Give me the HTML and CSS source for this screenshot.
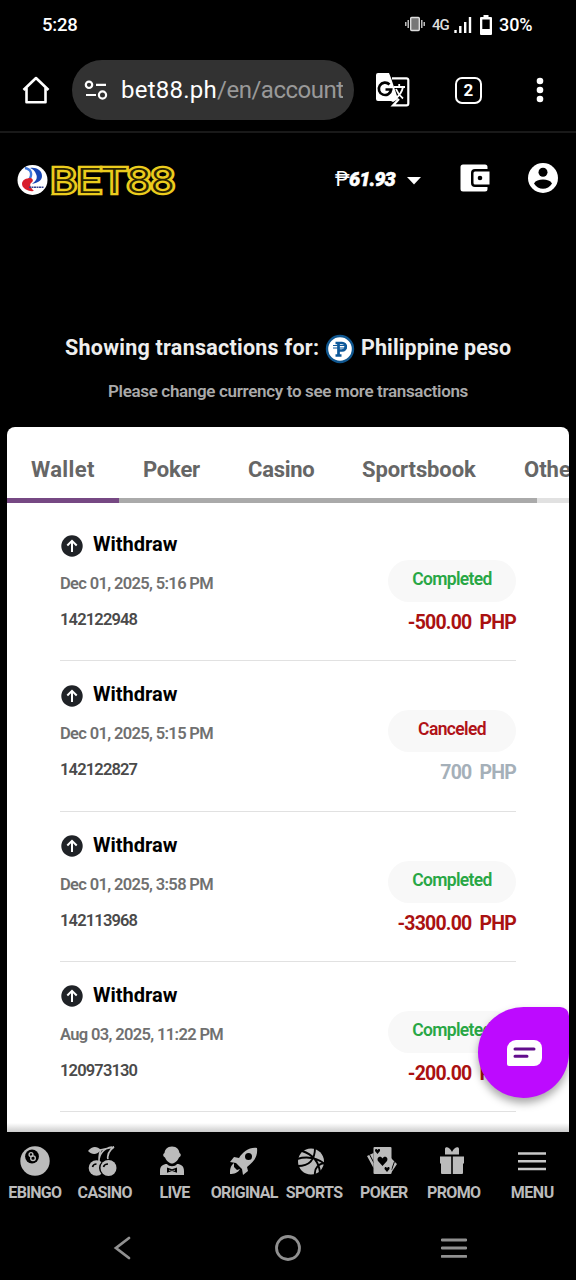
FILE: index.html
```html
<!DOCTYPE html>
<html lang="en">
<head>
<meta charset="utf-8">
<title>BET88</title>
<link rel="stylesheet" href="styles.css">
</head>
<body>
<div class="screen">
  <div class="status">
    <span class="clock">5:28</span>
    <div class="status-icons">
      <svg width="20" height="16" viewBox="0 0 20 16"><rect x="5.700" y="1.500" width="8.600" height="13" rx="1" fill="#777" stroke="#ddd" stroke-width="1.400"/><path d="M3.200 4v8M.8 6v4M16.800 4v8M19.200 6v4" stroke="#ddd" stroke-width="1.300"/></svg>
      <span class="net">4G</span>
      <svg class="signal" width="18" height="16" viewBox="0 0 18 16"><path d="M1.500 13v3M6.300 9v7M11.200 5v11M16 0v16" stroke="#fff" stroke-width="2.400"/></svg>
      <svg class="battery" width="12" height="20" viewBox="0 0 12 20"><path d="M3.500 0h5v2H11a1 1 0 0 1 1 1v16a1 1 0 0 1-1 1H1a1 1 0 0 1-1-1V3a1 1 0 0 1 1-1h2.500zM2.300 4.500V14h7.400V4.500z" fill="#fff" fill-rule="evenodd"/></svg>
      <span class="percent">30%</span>
    </div>
  </div>

  <div class="browser">
    <svg class="home" width="28" height="28" viewBox="0 0 28 28" fill="none" stroke="#fff" stroke-width="2.600" stroke-linejoin="round"><path d="M1.500 14L14 2l12.500 12M4.500 12v14.200h19V12"/></svg>
    <div class="url">
      <svg width="24" height="20" viewBox="0 0 24 20" fill="none" stroke="#fff" stroke-width="2.200"><circle cx="5" cy="4.800" r="3.200"/><path d="M12 4.800h10M2 15h10"/><circle cx="18.500" cy="15" r="3.600"/></svg>
      <div class="url-text"><span class="host">bet88.ph</span><span class="path">/en/account</span></div>
    </div>
    <svg class="translate" width="34" height="34" viewBox="0 0 34 34"><path d="M2 0h11l2 5 7 21 -5 3-2-1H2a2 2 0 0 1-2-2V2a2 2 0 0 1 2-2z" fill="#fff"/><path d="M16 5.300h14.500a1.800 1.800 0 0 1 1.800 1.800v23.500a1.800 1.800 0 0 1-1.800 1.800H17L23 26" fill="none" stroke="#fff" stroke-width="2.200"/><path d="M13.500 11.500a6.200 6.200 0 1 0 1.700 5H9.500" fill="none" stroke="#000" stroke-width="2.600"/><path d="M18 14h11M23.200 11v3M27 14c-1 5-4 9-8 12M20 16c1.500 4 4 7 7 9.500" fill="none" stroke="#fff" stroke-width="1.800"/></svg>
    <div class="count">2</div>
    <svg class="dots" width="8" height="26" viewBox="0 0 8 26" fill="#fff"><circle cx="4" cy="4" r="3.300"/><circle cx="4" cy="13" r="3.300"/><circle cx="4" cy="22" r="3.300"/></svg>
  </div>

  <header class="site">
    <svg class="logo" width="160" height="36" viewBox="0 0 160 36">
      <circle cx="15.500" cy="19" r="15" fill="#fff"/>
      <path d="M13 7c6-1 12 2 12 8 0 5-5 7-10 8 4-3 6-6 4-10-1-3-3-5-6-6z" fill="#1746b5"/>
      <path d="M8 7c6 1 8 6 4 12" fill="none" stroke="#3f78dc" stroke-width="2.400"/>
      <path d="M14 17c2 1 3 3 0 5-2 2 0 5 3 8-6 1-12-3-12-7 0-4 4-6 9-6z" fill="#d81e2c"/>
      <path d="M12 26.200h15" stroke="#33438f" stroke-width="1.600" stroke-dasharray="2 .5"/>
      <text class="logo-text logo-edge" x="33.500" y="31.600" textLength="124" lengthAdjust="spacingAndGlyphs">BET88</text>
      <text class="logo-text logo-core" x="33.500" y="31.600" textLength="124" lengthAdjust="spacingAndGlyphs">BET88</text>
    </svg>
    <div class="balance"><span class="sign">₱</span><span class="sum">61.93</span></div>
    <svg class="caret" width="14" height="8" viewBox="0 0 14 8"><path d="M0 0h14L7 7.500z" fill="#fff"/></svg>
    <svg class="purse" width="30" height="28" viewBox="0 0 30 28"><path d="M3 .5h22a2.500 2.500 0 0 1 2.500 2.500v2H15a4 4 0 0 0-4 4v10a4 4 0 0 0 4 4h12.500v2a2.500 2.500 0 0 1-2.500 2.500H3A2.500 2.500 0 0 1 .5 25V3A2.500 2.500 0 0 1 3 .5z" fill="#fff"/><path d="M15 7.500h14.500v13H15a1.500 1.500 0 0 1-1.500-1.500V9A1.500 1.500 0 0 1 15 7.500z" fill="#fff"/><circle cx="20" cy="14" r="2.300" fill="#000"/></svg>
    <svg class="user" width="30" height="30" viewBox="0 0 30 30"><circle cx="15" cy="15" r="15" fill="#fff"/><circle cx="15" cy="9.300" r="4.500" fill="#000"/><path d="M6 20.500c1.500-3 5-4 9-4s7.500 1 9 4c-2 3.500-5.500 5.300-9 5.300s-7-1.800-9-5.300z" fill="#000"/></svg>
  </header>

  <section class="heading">
    <div class="showing">
      <span>Showing transactions for:</span>
      <svg width="30" height="30" viewBox="0 0 30 30"><circle cx="15" cy="15" r="13" fill="#fff" stroke="#0f568f" stroke-width="2.400"/><path d="M10.500 9H17c5 0 5 7.500 0 7.500h-3.500M13.500 9v12M10.500 21.500h6" fill="none" stroke="#0c589a" stroke-width="2.700"/><path d="M8 11.500h14M8 14h14" stroke="#0c589a" stroke-width="1.200"/></svg>
      <span class="peso">Philippine peso</span>
    </div>
    <p class="hint">Please change currency to see more transactions</p>
  </section>

  <main class="card">
    <nav class="tabs">
      <span class="tab t-wallet">Wallet</span><span class="tab t-poker">Poker</span><span class="tab t-casino">Casino</span><span class="tab t-sports">Sportsbook</span><span class="tab">Others</span>
    </nav>
    <div class="track"><div class="active"></div><div class="rest"></div></div>
    <div class="list">
      <article class="row">
        <div class="info">
          <div class="kind"><svg width="22" height="22" viewBox="0 0 22 22"><circle cx="11" cy="11" r="10.700" fill="#202327"/><path d="M11 17V6M6.300 10.500L11 5.800l4.700 4.700" fill="none" stroke="#fff" stroke-width="2"/></svg><span>Withdraw</span></div>
          <div class="date">Dec 01, 2025, 5:16 PM</div><div class="ref">142122948</div>
        </div>
        <div class="result"><div class="pill done">Completed</div><div class="amount">-500.00 PHP</div></div>
      </article>
      <article class="row">
        <div class="info">
          <div class="kind"><svg width="22" height="22" viewBox="0 0 22 22"><circle cx="11" cy="11" r="10.700" fill="#202327"/><path d="M11 17V6M6.300 10.500L11 5.800l4.700 4.700" fill="none" stroke="#fff" stroke-width="2"/></svg><span>Withdraw</span></div>
          <div class="date">Dec 01, 2025, 5:15 PM</div><div class="ref">142122827</div>
        </div>
        <div class="result"><div class="pill canceled">Canceled</div><div class="amount void">700 PHP</div></div>
      </article>
      <article class="row">
        <div class="info">
          <div class="kind"><svg width="22" height="22" viewBox="0 0 22 22"><circle cx="11" cy="11" r="10.700" fill="#202327"/><path d="M11 17V6M6.300 10.500L11 5.800l4.700 4.700" fill="none" stroke="#fff" stroke-width="2"/></svg><span>Withdraw</span></div>
          <div class="date">Dec 01, 2025, 3:58 PM</div><div class="ref">142113968</div>
        </div>
        <div class="result"><div class="pill done">Completed</div><div class="amount">-3300.00 PHP</div></div>
      </article>
      <article class="row">
        <div class="info">
          <div class="kind"><svg width="22" height="22" viewBox="0 0 22 22"><circle cx="11" cy="11" r="10.700" fill="#202327"/><path d="M11 17V6M6.300 10.500L11 5.800l4.700 4.700" fill="none" stroke="#fff" stroke-width="2"/></svg><span>Withdraw</span></div>
          <div class="date">Aug 03, 2025, 11:22 PM</div><div class="ref">120973130</div>
        </div>
        <div class="result"><div class="pill done">Completed</div><div class="amount">-200.00 PHP</div></div>
      </article>
    </div>
    <div class="chat"><svg width="36" height="26" viewBox="0 0 36 26"><path d="M9 0h18a8 8 0 0 1 8 8v10a8 8 0 0 1-8 8H2a2 2 0 0 1-2-2V9a9 9 0 0 1 9-9z" fill="#fff"/><path d="M8 9h19M8 16.200h12" stroke="#620d8c" stroke-width="3" stroke-linecap="round"/></svg></div>
  </main>

  <nav class="dock">
    <div class="item"><svg viewBox="0 0 30 30"><circle cx="15" cy="15" r="14.700"/><circle cx="12" cy="10.500" r="6.900" fill="#000"/><g fill="none" stroke="#bbb" stroke-width="1.400"><circle cx="11" cy="8.500" r="1.900"/><circle cx="13" cy="12.200" r="2.300"/></g></svg><span>EBINGO</span></div>
    <div class="item casino"><svg viewBox="0 0 30 30"><path d="M0 5c4-5 9-5 13-1-4 5-9 5-13 1z"/><path d="M12 4l14-3C20 5 19 10 20 15M13 4c-2 3-2 7-2 11M24 1c-8 1-13 7-13 14" fill="none" stroke="#bbb" stroke-width="1.600"/><circle cx="8.500" cy="22" r="7.800"/><circle cx="20" cy="22" r="9" fill="#000"/><circle cx="20.500" cy="22" r="8"/><path d="M4.500 21c.5-2 2-3 4-3M15.500 21c.5-2 2-3 4.500-3" fill="none" stroke="#000" stroke-width="1.600"/></svg><span>CASINO</span></div>
    <div class="item live"><svg viewBox="0 0 30 30"><path d="M15 .5c5 0 7 3 7.500 6.500 2 1 1.500 3.500-.5 4.500-1.500 3.500-4.500 6-7 6s-5.500-2.500-7-6C6 10.500 5.500 8 7.500 7 8 3.500 10 .5 15 .5z"/><path d="M3 29v-4c0-5 3-7 7-7 2 3 8 3 10 0 4 0 7 2 7 7v4z"/><path d="M10 21.500l5 1.800 5-1.800v5.300l-5-1.800-5 1.800z" fill="#000"/><path d="M12 23.800v1l3-.6 3 .6v-1l-3 .6z"/></svg><span>LIVE</span></div>
    <div class="item orig"><svg viewBox="0 0 30 30"><path d="M28 2c1 8-3 14-10 19l1 4-5 4-1-6-6-6-6-1 4-5 5 1C14 6 20 1 28 2z"/><circle cx="19.500" cy="10.500" r="3.500" fill="#000"/><path d="M5 17c-4 3-4 7-4 11 4 0 8-1 10-5l-3 1-3-3z"/></svg><span>ORIGINAL</span></div>
    <div class="item sports"><svg viewBox="0 0 30 30"><circle cx="14" cy="15.500" r="13"/><path d="M5 5c9 3 17 9 18 22M18 2c0 12-6 18-17 18M0 13c10-3 20-1 28 5M18 29c-1-7 4-12 11-12" fill="none" stroke="#000" stroke-width="1.900"/></svg><span>SPORTS</span></div>
    <div class="item poker"><svg viewBox="0 0 30 30"><path d="M6.500 7L0 10l6.500 12zM24 12l6 6-6 9z"/><path d="M2.500 8.500L7 17M27.500 15.500L24.500 24" stroke="#000" stroke-width="1"/><path d="M7.500 1h16a1 1 0 0 1 1 1v25a1 1 0 0 1-1 1h-16a1 1 0 0 1-1-1V2a1 1 0 0 1 1-1z"/><path d="M15.500 20l-4.500-5c-2-4 3-6 4.500-2.500 1.500-3.500 6.500-1.500 4.500 2.500zM10.500 8L8 5c0-3 2-2 2.500-1 .5-1 3-2 2.500 1zM20 26l-2.500-3c0-3 2-2 2.500-1 .5-1 3-2 2.500 1z" fill="#000"/></svg><span>POKER</span></div>
    <div class="item promo"><svg viewBox="0 0 30 30"><path d="M3 10.500h11.200V28H5a1 1 0 0 1-1-1v-9.500H3zM15.800 10.500H27v7h-1V27a1 1 0 0 1-1 1h-9.200zM15 8.500H8V3c0-3 5-2 7 3 2-5 7-6 7-3v5.500z"/></svg><span>PROMO</span></div>
    <div class="item menu"><svg viewBox="0 0 30 30"><path d="M1 7.500h28M1 15.200h28M1 23h28" stroke="#c8c8c8" stroke-width="2.600"/></svg><span>MENU</span></div>
  </nav>

  <div class="system">
    <svg width="26" height="26" viewBox="0 0 26 26"><path d="M20 3L7 13l13 10"/></svg>
    <svg width="26" height="26" viewBox="0 0 26 26"><circle cx="13" cy="13" r="11.500"/></svg>
    <svg width="26" height="26" viewBox="0 0 26 26"><path d="M1 5h24M1 13h24M1 21.300h24"/></svg>
  </div>
</div>
</body>
</html>
```
FILE: styles.css
```css
* { box-sizing: border-box; }
body { margin: 0; background: #000; font-family: Roboto, "Liberation Sans", sans-serif; }
svg { display: block; flex: none; }
.screen { width: 576px; height: 1280px; overflow: hidden; display: flex; flex-direction: column; background: #000; color: #fff; white-space: nowrap; }
.status { height: 49px; flex: none; padding: 0 42px; display: flex; align-items: center; justify-content: space-between; }
.clock { font-size: 18.500px; font-weight: 500; letter-spacing: -.2px; }
.status-icons { display: flex; align-items: center; }
.status-icons > svg:first-child { margin-top: -2px; }
.net { margin: 0 5px 0 7px; font-size: 15px; letter-spacing: -1px; width: 17px; color: #ddd; font-weight: 500; }
.battery { margin: 0 7px 0 8px; }
.percent { font-size: 18px; font-weight: 500; width: 35px; letter-spacing: -.1px; }

.browser { height: 84px; flex: none; padding: 0 32px 0 22px; display: flex; align-items: center; border-bottom: 2px solid #191919; }
.url { width: 282px; height: 60px; margin-left: 22px; padding: 0 11px 0 12px; border-radius: 30px; background: #323232; display: flex; align-items: center; gap: 13px; }
.url-text { flex: 1; overflow: hidden; font-size: 24px; line-height: 34px; letter-spacing: .25px; }
.path { color: #999; letter-spacing: -.5px; }
.translate { margin-left: 22px; }
.count { width: 27px; height: 27px; margin-left: 45px; border: 2.500px solid #fff; border-radius: 7px; display: grid; place-items: center; font-size: 17px; font-weight: 700; }
.dots { margin-left: auto; }

.site { height: 92px; flex: none; padding: 0 18px 0 17px; display: flex; align-items: center; }
.logo-text { font-size: 35px; font-weight: 300; }
.logo-edge { fill: #ebcc1d; stroke: #ebcc1d; stroke-width: 4.600px; }
.logo-core { fill: #2b2400; }
.balance { display: flex; align-items: center; width: 64px; margin-left: 158px; }
.sign { font-size: 20px; width: 14px; }
.sum { font-size: 20px; font-weight: 900; font-style: italic; letter-spacing: -1px; -webkit-text-stroke: .5px #fff; }
.caret { margin: 4px 0 0 8px; }
.purse { margin: -3px 0 0 39px; }
.user { margin: -3px 0 0 auto; }

.heading { height: 202px; flex: none; padding-top: 106px; }
.showing { display: flex; align-items: center; padding-left: 65px; height: 34px; color: #eee; font-size: 21.500px; font-weight: 700; }
.showing > span { position: relative; top: -1px; }
.showing > span:first-child { width: 255px; letter-spacing: .25px; }
.showing svg { margin: 2px 6px 0 5px; }
.peso { letter-spacing: .1px; }
.hint { margin: 16px 0 0; text-align: center; color: #aaa; font-size: 17px; line-height: 20px; font-weight: 600; letter-spacing: -.33px; }

.card { position: relative; width: 562px; height: 705px; flex: none; margin-left: 7px; background: #fff; border-radius: 8px 8px 0 0; display: flex; flex-direction: column; overflow: hidden; }
.card::after { content: ""; position: absolute; left: 0; right: 0; bottom: 0; height: 9px; background: linear-gradient(transparent, #ccc); }
.tabs { height: 71px; flex: none; padding: 13px 0 0 24px; display: flex; align-items: center; gap: 48px; font-size: 22px; font-weight: 700; color: #666; }
.tab { flex: none; }
.t-wallet { width: 64px; letter-spacing: .35px; }
.t-poker { width: 57px; letter-spacing: -.2px; }
.t-casino { width: 66px; letter-spacing: -.25px; }
.t-sports { width: 114px; letter-spacing: -.1px; }
.track { height: 5px; flex: none; display: flex; background: #e1e1e1; }
.active { width: 112px; background: #764883; }
.rest { width: 418px; background: #aaa; }
.list { padding: 8px 53px 0; }
.row { height: 150.300px; border-bottom: 1px solid #e1e1e1; display: flex; justify-content: space-between; color: #000; }
.info { padding-top: 20px; }
.kind { height: 26px; display: flex; align-items: center; gap: 10px; font-size: 20px; font-weight: 700; }
.kind svg { margin: 3px 0 0 1px; }
.date { margin-top: 17px; font-size: 16.500px; line-height: 20px; font-weight: 600; color: #707070; letter-spacing: -.65px; }
.ref { margin-top: 16px; font-size: 16.500px; line-height: 20px; font-weight: 600; color: #4a4a4a; letter-spacing: -.85px; }
.result { padding-top: 49px; display: flex; flex-direction: column; align-items: flex-end; }
.pill { width: 128px; height: 42px; border-radius: 21px; background: #f8f8f8; display: grid; place-items: center; padding-bottom: 4px; font-size: 17.500px; font-weight: 600; letter-spacing: -.65px; }
.done { color: #28a745; }
.canceled { color: #b01217; }
.amount { margin-top: 9px; font-size: 19.500px; line-height: 24px; font-weight: 700; color: #aa1111; word-spacing: 4px; letter-spacing: -.8px; }
.void { color: #a5b0b9; }
.chat { position: absolute; left: 471px; top: 580px; width: 91px; height: 91px; z-index: 2; border-radius: 46px 9px 46px 46px; background: #bd0aff; display: grid; place-items: center; padding-left: 2px; box-shadow: 0 5px 8px rgba(0,0,0,.35); }

.dock { height: 84px; flex: none; display: flex; color: #bbb; }
.item { width: 69.800px; display: flex; flex-direction: column; align-items: center; padding-top: 14px; gap: 7px; font-size: 16px; line-height: 19px; font-weight: 700; letter-spacing: -.65px; }
.item svg { width: 30px; height: 30px; fill: #bbb; }
.casino svg, .live svg, .promo svg, .sports svg, .poker svg { margin-right: 4px; }
.menu { width: 87.400px; letter-spacing: -.4px; }
.system { height: 64px; flex: none; padding: 0 109px; display: flex; align-items: center; justify-content: space-between; }
.system svg { fill: none; stroke: #909090; stroke-width: 2.800px; stroke-linecap: round; }
```
